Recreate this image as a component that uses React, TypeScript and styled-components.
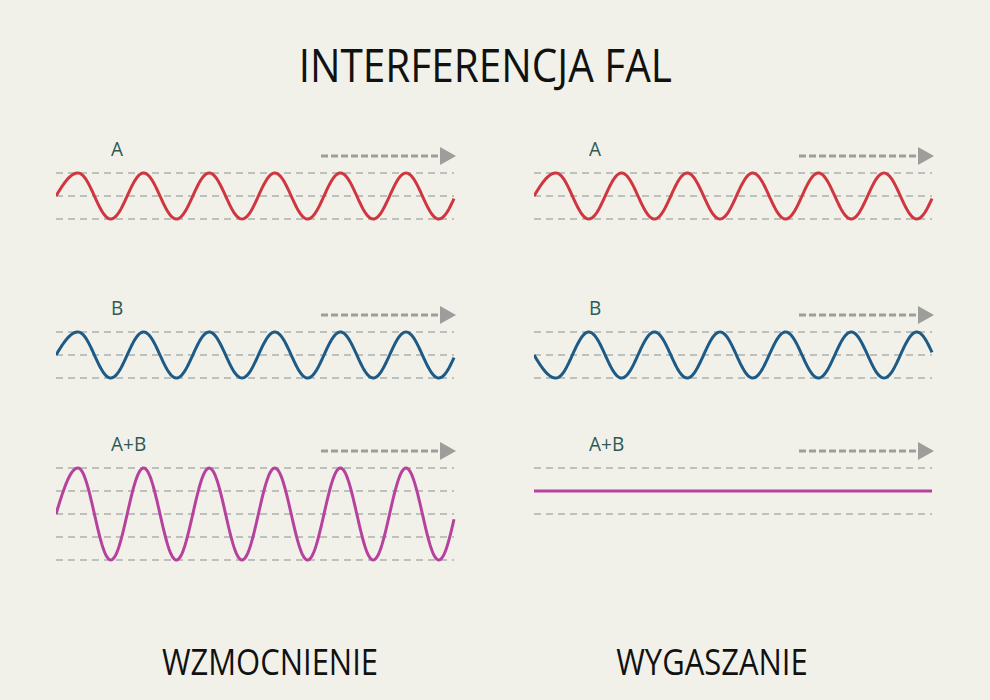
import * as React from 'react'
import styled, { createGlobalStyle } from 'styled-components'

const GlobalStyle = createGlobalStyle`
  html, body {
    margin: 0;
    padding: 0;
    background: #f1f1ea;
  }
`

const WIDTH = 400
const WAVE_END = 398
const FIRST_PEAK = 22
const PERIOD = 65.6

const wavePath = (amp: number, mid: number, invert: boolean) => {
  const sign = invert ? -1 : 1
  const pts: string[] = []
  for (let x = 0; x <= WAVE_END; x += 1) {
    const phase =
      x < FIRST_PEAK
        ? (x / FIRST_PEAK) * (Math.PI / 2)
        : Math.PI / 2 + ((x - FIRST_PEAK) / PERIOD) * Math.PI * 2
    const y = mid - sign * amp * Math.sin(phase)
    pts.push(`${x === 0 ? 'M' : 'L'}${x} ${y.toFixed(2)}`)
  }
  return pts.join(' ')
}

interface WaveProps {
  label: string
  color: string
  amp: number
  lines: number
  invert?: boolean
  flat?: boolean
  gapTop: number
}

const Wave: React.FunctionComponent<WaveProps> = ({
  label,
  color,
  amp,
  lines,
  invert = false,
  flat = false,
  gapTop
}) => {
  const step = 23
  const height = (lines - 1) * step + 6
  const mid = height / 2
  const guides = Array.from({ length: lines }, (_, i) => 3 + i * step)
  return (
    <Block gapTop={gapTop}>
      <LabelRow>
        <Label>{label}</Label>
        <Arrow width='135' height='20' viewBox='0 0 135 20'>
          <line x1='0' y1='10' x2='120' y2='10' stroke='#9d9e9c' strokeWidth='3' strokeDasharray='7 3' />
          <polygon points='119,1 135,10 119,19' fill='#9d9e9c' />
        </Arrow>
      </LabelRow>
      <svg width={WIDTH} height={height} viewBox={`0 0 ${WIDTH} ${height}`}>
        {guides.map(y => (
          <line
            key={y}
            x1='0'
            y1={y}
            x2={WAVE_END}
            y2={y}
            stroke='#879191'
            strokeWidth='1.2'
            strokeDasharray='7 5'
          />
        ))}
        {flat ? (
          <line x1='0' y1={mid} x2={WAVE_END} y2={mid} stroke={color} strokeWidth='3.2' />
        ) : (
          <path d={wavePath(amp, mid, invert)} fill='none' stroke={color} strokeWidth='3' />
        )}
      </svg>
    </Block>
  )
}

const RED = '#d0363f'
const BLUE = '#1d5a86'
const MAGENTA = '#b7429d'

const App: React.FunctionComponent = () => (
  <Page>
    <GlobalStyle />
    <Title>INTERFERENCJA FAL</Title>
    <Columns>
      <Column>
        <Wave label='A' color={RED} amp={23} lines={3} gapTop={0} />
        <Wave label='B' color={BLUE} amp={23} lines={3} gapTop={76} />
        <Wave label='A+B' color={MAGENTA} amp={46} lines={5} gapTop={53} />
      </Column>
      <Column>
        <Wave label='A' color={RED} amp={23} lines={3} gapTop={0} />
        <Wave label='B' color={BLUE} amp={23} lines={3} gapTop={76} invert />
        <Wave label='A+B' color={MAGENTA} amp={0} lines={3} gapTop={53} flat />
      </Column>
    </Columns>
    <Footer>
      <Caption>WZMOCNIENIE</Caption>
      <Caption>WYGASZANIE</Caption>
    </Footer>
  </Page>
)

export { App as default }

const Page = styled.div`
  width: 990px;
  height: 700px;
  display: flex;
  flex-direction: column;
  align-items: center;
  font-family: 'Open Sans', 'Noto Sans', sans-serif;
  overflow: hidden;
`

const Title = styled.h1`
  margin: 42px 20px 0 0;
  font-size: 45px;
  line-height: 45px;
  font-weight: 400;
  color: #111;
  transform: scaleX(0.9);
`

const Columns = styled.div`
  display: grid;
  grid-template-columns: 400px 400px;
  column-gap: 78px;
  margin-top: 52px;
`

const Column = styled.div`
  display: flex;
  flex-direction: column;
`

const Block = styled.div<{ gapTop: number }>`
  display: flex;
  flex-direction: column;
  gap: 4px;
  margin-top: ${p => p.gapTop}px;

  svg {
    display: block;
  }
`

const LabelRow = styled.div`
  display: flex;
  justify-content: space-between;
  align-items: flex-start;
  height: 27px;
  padding-left: 55px;
`

const Label = styled.span`
  font-size: 20px;
  line-height: 20px;
  color: #2e5a54;
  transform: scaleX(0.95);
  transform-origin: left center;
`

const Arrow = styled.svg`
  margin-top: 7px;
`

const Footer = styled.div`
  align-self: flex-start;
  display: grid;
  grid-template-columns: 540px 344px;
  margin-top: 81px;
`

const Caption = styled.div`
  text-align: center;
  font-size: 36px;
  line-height: 36px;
  color: #111;
  transform: scaleX(0.86);
`
